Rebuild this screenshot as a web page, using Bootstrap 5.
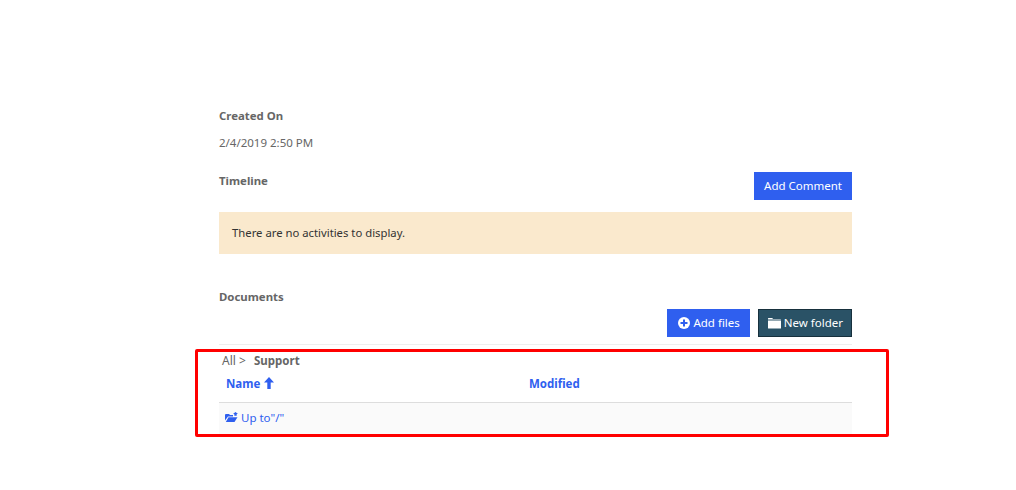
<!DOCTYPE html>
<html lang="en">
<head>
<meta charset="utf-8">
<title>Documents</title>
<link href="https://cdn.jsdelivr.net/npm/bootstrap@5.3.0/dist/css/bootstrap.min.css" rel="stylesheet">
<style>
html,body{height:490px;overflow:hidden;background:#fff}
body{font-family:"Noto Sans","Open Sans","Liberation Sans",sans-serif;font-size:11.5px;line-height:18px;color:#666}
.page-wrap{width:633px;margin-left:219px;padding-top:107px;position:relative}
.field-label{font-weight:700;font-size:11.4px;color:#666;margin:0}
.date-val{margin:9px 0 0;height:18px}
.timeline-row{margin-top:20px;height:28px}
.act-btn{font-size:11.5px;line-height:18px;padding:4px 9px;border-radius:0;border:1px solid #2f5fef;background:#2f5fef;color:#fff;display:inline-flex;align-items:center;gap:3px;height:28px}
.act-btn:hover{background:#2f5fef;color:#fff;border-color:#2f5fef}
.add-btn{padding-left:10px}
.folder-btn,.folder-btn:hover{background:#2a5266;border-color:#17303d;color:#fff;padding-right:8px}
.note-box{margin:12px 0 0;height:42px;padding:12px 13px;background:#fae9cd;color:#333;border:0;border-radius:0;font-size:11.3px}
.docs-label{margin-top:34px}
.docs-actions{margin-top:3px}
.soft-rule{margin:7px 0 0;border:0;border-top:1px solid #eee;opacity:1}
.crumbs{margin-top:7px;padding-left:3px;height:18px;font-size:12px}
.crumbs b{margin-left:5px;color:#666;font-size:11.5px}
.file-table{margin:4px 0 0;width:100%;--bs-table-bg:transparent;font-size:11.5px}
.file-table th{padding:1px 7px 9px;height:28px;border-bottom:1px solid #ddd;font-weight:700;vertical-align:top}
.file-table th:first-child{width:303px}
.file-table td{padding:6px 6px;height:31px;background:#fafafa;border:0;vertical-align:middle}
.file-table a{color:#2f5fef;text-decoration:none}
.sort-arrow{margin-left:1px;vertical-align:-1px}
.row-icon{vertical-align:-1px}
.mark-frame{position:absolute;left:-24px;top:349px;width:694px;height:88px;border:3px solid #f00;border-radius:2px;pointer-events:none}
</style>
</head>
<body>
<main class="page-wrap">
  <p class="field-label">Created On</p>
  <p class="date-val">2/4/2019 2:50 PM</p>
  <div class="d-flex justify-content-between align-items-start timeline-row">
    <p class="field-label">Timeline</p>
    <button type="button" class="btn act-btn">Add Comment</button>
  </div>
  <div class="alert note-box" role="alert">There are no activities to display.</div>
  <p class="field-label docs-label">Documents</p>
  <div class="d-flex justify-content-end gap-2 docs-actions">
    <button type="button" class="btn act-btn add-btn">
      <svg width="12" height="12" viewBox="0 0 12 12"><circle cx="6" cy="6" r="6" fill="#fff"/><path d="M5 2.500h2V5h2.500v2H7v2.500H5V7H2.500V5H5z" fill="#2f5fef"/></svg>
      Add files</button>
    <button type="button" class="btn act-btn folder-btn">
      <svg width="13" height="12" viewBox="0 0 13 12"><path d="M0 2.500V1.500Q0 1 .5 1H4Q4.500 1 5 2h7.500Q13 2 13 2.500z" fill="#fff"/><path d="M0 3.500h13V11Q13 11.500 12.500 11.500H.5Q0 11.500 0 11z" fill="#fff"/></svg>
      New folder</button>
  </div>
  <hr class="soft-rule">
  <div class="crumbs">All &gt; <b>Support</b></div>
  <table class="table file-table">
    <thead>
      <tr>
        <th><a href="#">Name
          <svg class="sort-arrow" width="10" height="12" viewBox="0 0 10 12"><path d="M5 0 10 5.500H6.700V12H3.300V5.500H0z" fill="#2f5fef"/></svg></a></th>
        <th><a href="#">Modified</a></th>
      </tr>
    </thead>
    <tbody>
      <tr>
        <td colspan="2"><a href="#">
          <svg class="row-icon" width="13" height="11" viewBox="0 0 13 11"><path d="M0 3Q0 2 1 2H4L5 3H8V4.500H3L0 8.500z" fill="#2f5fef"/><path d="M3.500 5.200H12.500L9.500 10H.8z" fill="#2f5fef"/><path d="M10.500 0 13 2H11.700V3.800H9.300V2H8z" fill="#2f5fef"/></svg>
          Up to"/"</a></td>
      </tr>
    </tbody>
  </table>
  <div class="mark-frame"></div>
</main>
<script src="https://cdn.jsdelivr.net/npm/bootstrap@5.3.0/dist/js/bootstrap.bundle.min.js"></script>
</body>
</html>
